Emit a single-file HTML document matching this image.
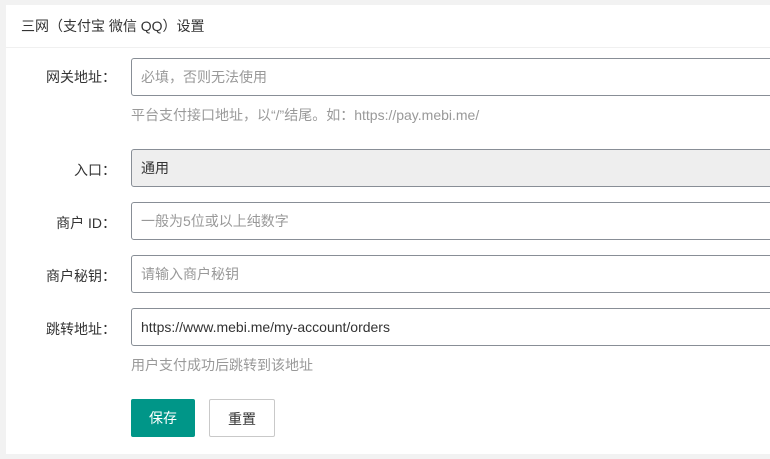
<!DOCTYPE html><html><head><meta charset="utf-8"><style>
body{margin:0;background:#f2f2f2;width:770px;height:459px;overflow:hidden;font-family:"Liberation Sans","Noto Sans CJK SC",sans-serif;font-size:14px;color:#333}
.card{position:absolute;left:6px;top:5px;width:800px;height:449px;background:#fff}
.hd{height:42px;line-height:42px;padding-left:15px;border-bottom:1px solid #f0f0f0;font-size:14px;color:#333}
.lab{position:absolute;right:0;width:110px;text-align:right;font-size:14px;color:#333}
.in{position:absolute;left:125px;width:700px;height:36px;border:1px solid #888e96;border-radius:3px;line-height:36px;padding-left:9px;box-sizing:content-box;color:#999}
.hint{position:absolute;left:125px;color:#999;font-size:14px}
.btn{position:absolute;top:394px;height:38px;line-height:38px;text-align:center;border-radius:2px;font-size:14px}
</style></head><body><div class="card">
<div class="hd">三网（支付宝 微信 QQ）设置</div>
<div class="lab" style="left:0;top:62px">网关地址：</div>
<div class="in" style="top:53px">必填，否则无法使用</div>
<div class="hint" style="top:100px">平台支付接口地址，以“/”结尾。如：https://pay.mebi.me/</div>
<div class="lab" style="left:0;top:155px">入口：</div>
<div class="in" style="top:144px;background:#eee;color:#333">通用</div>
<div class="lab" style="left:0;top:208px">商户 ID：</div>
<div class="in" style="top:197px">一般为5位或以上纯数字</div>
<div class="lab" style="left:0;top:261px">商户秘钥：</div>
<div class="in" style="top:250px">请输入商户秘钥</div>
<div class="lab" style="left:0;top:314px">跳转地址：</div>
<div class="in" style="top:303px;color:#333">https://www.mebi.me/my-account/orders</div>
<div class="hint" style="top:350px">用户支付成功后跳转到该地址</div>
<div class="btn" style="left:125px;width:64px;background:#009688;color:#fff">保存</div>
<div class="btn" style="left:203px;width:66px;border:1px solid #c9c9c9;box-sizing:border-box;color:#333">重置</div>
</div></body></html>
